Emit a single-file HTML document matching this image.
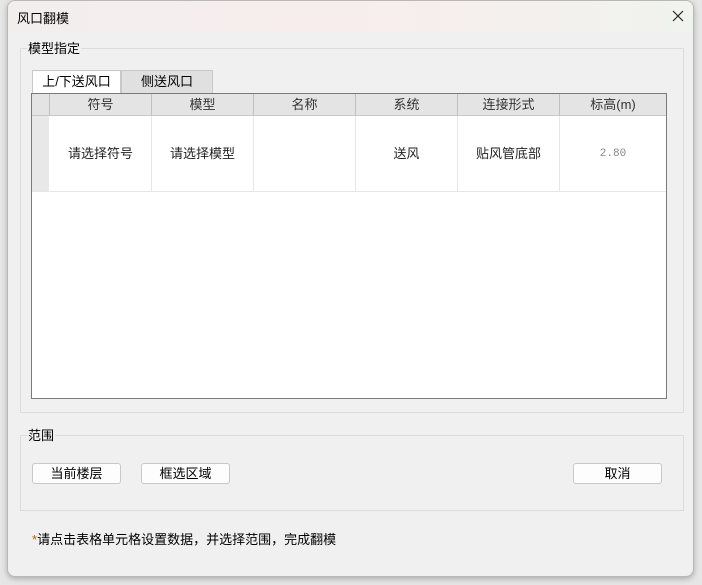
<!DOCTYPE html>
<html><head><meta charset="utf-8"><style>
*{margin:0;padding:0;box-sizing:border-box}
body{width:702px;height:585px;background:#e6e6e6;font-family:"Liberation Sans","Noto Sans CJK SC",sans-serif;font-size:13px;color:#000;position:relative;overflow:hidden}
.win{position:absolute;left:7px;top:0;width:687px;height:577px;background:#f0f0f0;border:1px solid #b8b8b8;border-radius:8px;box-shadow:0 2px 6px rgba(0,0,0,.25);overflow:hidden}
.title{position:absolute;left:0;top:0;width:100%;height:31px;background:linear-gradient(90deg,#f2eeee,#f8eded 50%,#f0f3ee);}
.title span{position:absolute;left:9px;top:7px}
.close{position:absolute;right:8px;top:8px;width:14px;height:14px}
.abs{position:absolute}
.grp{position:absolute;border:1px solid #dcdcdc}
.lbl{position:absolute;background:#f0f0f0;padding:0 1px;line-height:14px}
.tab{position:absolute;height:23px;text-align:center;line-height:22px;border:1px solid #c8c8c8;border-bottom:none}
.tbl{position:absolute;left:23px;top:92px;width:636px;height:306px;border:1px solid #7a7a7a;background:#fff}
.hd{position:absolute;top:0;height:22px;background:#e4e4e4;border-right:1px solid #c0c0c0;border-bottom:1px solid #c8c8c8;text-align:center;line-height:21px;color:#333}
.cell{position:absolute;top:22px;height:76px;border-right:1px solid #e6e6e6;border-bottom:1px solid #e6e6e6;text-align:center;line-height:76px;color:#222}
.btn{position:absolute;top:462px;width:89px;height:21px;background:#fdfdfd;border:1px solid #c8c8c8;border-radius:3px;text-align:center;line-height:19px}
</style></head><body>
<div class="win">
<div class="title"><span>风口翻模</span>
<svg class="close" viewBox="0 0 14 14"><path d="M2 2L12 12M12 2L2 12" stroke="#222" stroke-width="1.2"/></svg></div>
<div class="grp" style="left:12px;top:47px;width:664px;height:365px"></div>
<div class="lbl" style="left:19px;top:41px">模型指定</div>
<div class="tab" style="left:24px;top:69px;width:89px;background:#fff">上/下送风口</div>
<div class="tab" style="left:113px;top:69px;width:92px;background:#e0e0e0">侧送风口</div>
<div class="tbl">
<div class="hd" style="left:0;width:18px"></div>
<div class="hd" style="left:18px;width:102px">符号</div>
<div class="hd" style="left:120px;width:102px">模型</div>
<div class="hd" style="left:222px;width:102px">名称</div>
<div class="hd" style="left:324px;width:102px">系统</div>
<div class="hd" style="left:426px;width:102px">连接形式</div>
<div class="hd" style="left:528px;width:106px;border-right:none">标高(m)</div>
<div class="cell" style="left:0;width:18px;background:#e8e8e8;border-right:1px solid #fff"></div>
<div class="cell" style="left:18px;width:102px">请选择符号</div>
<div class="cell" style="left:120px;width:102px">请选择模型</div>
<div class="cell" style="left:222px;width:102px"></div>
<div class="cell" style="left:324px;width:102px">送风</div>
<div class="cell" style="left:426px;width:102px">贴风管底部</div>
<div class="cell" style="left:528px;width:106px;border-right:none;color:#888;font-family:'Liberation Mono',monospace;font-size:11px">2.80</div>
</div>
<div class="grp" style="left:12px;top:434px;width:664px;height:76px"></div>
<div class="lbl" style="left:19px;top:428px">范围</div>
<div class="btn" style="left:24px">当前楼层</div>
<div class="btn" style="left:133px">框选区域</div>
<div class="btn" style="left:565px">取消</div>
<div class="abs" style="left:24px;top:528px"><span style="color:#c06000">*</span>请点击表格单元格设置数据，并选择范围，完成翻模</div>
</div>
</body></html>
